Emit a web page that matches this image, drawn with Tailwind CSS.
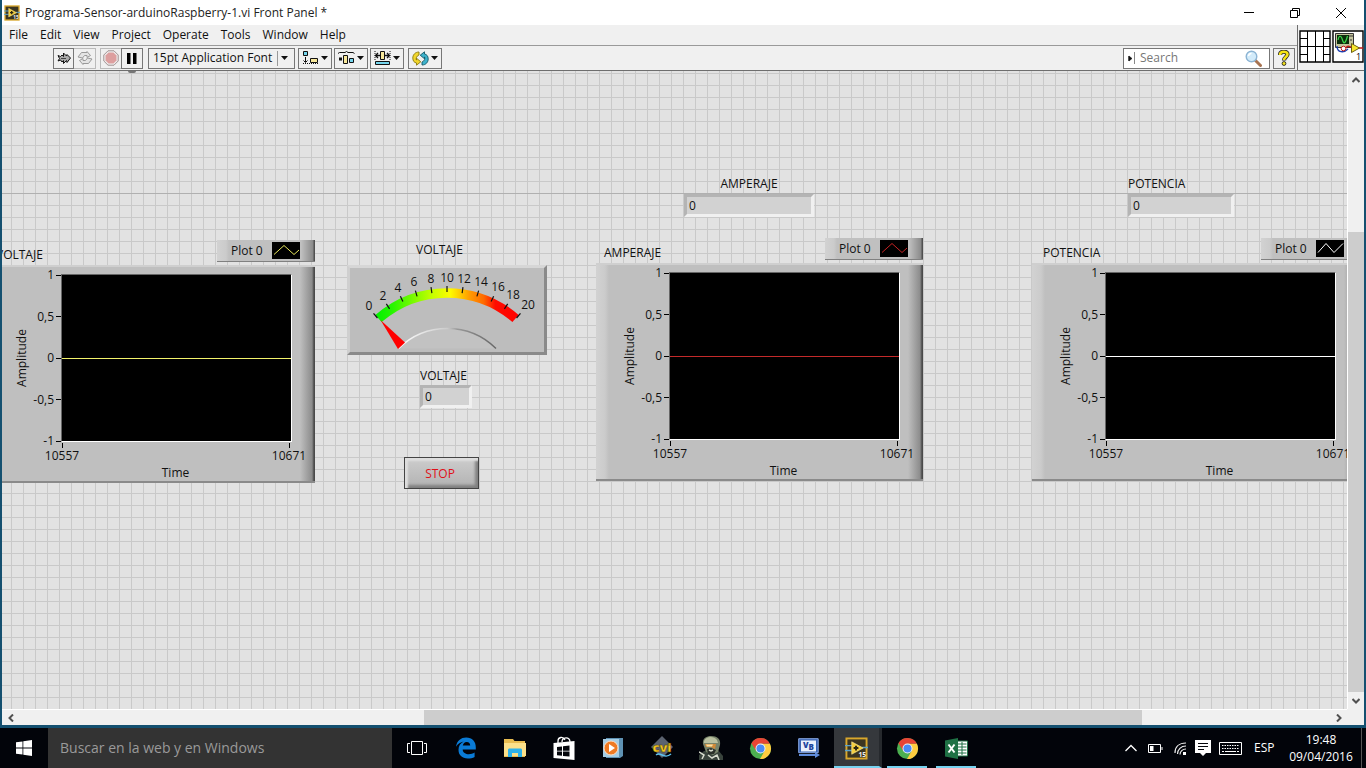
<!DOCTYPE html>
<html lang="es">
<head>
<meta charset="utf-8">
<title>Programa-Sensor-arduinoRaspberry-1.vi Front Panel *</title>
<meta name="viewport" content="width=device-width, initial-scale=1">
<script src="https://cdn.jsdelivr.net/npm/@tailwindcss/browser@4"></script>
</head>
<body class="flex h-screen flex-col overflow-hidden bg-[#02040a] font-['Open_Sans','Noto_Sans',sans-serif] text-xs text-[#111]">

<svg width="0" height="0" class="hidden" aria-hidden="true">
  <symbol id="chrome" viewBox="0 0 24 24">
    <circle cx="12" cy="12" r="11" fill="#4caf50"/>
    <path d="M12 7H21.8A11 11 0 0 1 11.500 23L16.300 14.500z" fill="#ffcd40"/>
    <path d="M12 12 7.500 14.600 2.500 6.500A11 11 0 0 1 21.800 7H12z" fill="#e84435"/>
    <circle cx="12" cy="12" r="5.200" fill="#f3f3f3"/>
    <circle cx="12" cy="12" r="4.200" fill="#4a8af4"/>
  </symbol>
  <symbol id="labview" viewBox="0 0 24 24">
    <rect x="1.500" y="1.500" width="21" height="21" fill="#3b3521" stroke="#d9a72c" stroke-width="2"/>
    <path d="M0 9H7M0 14H7M18 11H24" stroke="#5aa2cc" stroke-width="1.500"/>
    <path d="M7 5 19 11.500 7 18z" fill="#f5cf3d" stroke="#fff0a0" stroke-width=".6"/>
    <path d="M11.500 9v5M9 11.500h5" stroke="#2d2711" stroke-width="2"/>
    <text x="14" y="21" font-size="7" font-weight="700" fill="#eee">15</text>
  </symbol>
  <symbol id="caret" viewBox="0 0 7 4"><path d="M0 0H7L3.500 4z" fill="#111"/></symbol>
</svg>

<div class="flex min-h-0 flex-1 flex-col border-x-2 border-b-3 border-[#145070] bg-[#f0f0f0]">
  <header class="flex h-[25px] shrink-0 items-center bg-white pl-[2px]">
    <svg class="size-4" aria-hidden="true"><use href="#labview"/></svg>
    <h1 class="ml-[5px] flex-1 text-[#222]">Programa-Sensor-arduinoRaspberry-1.vi Front Panel *</h1>
    <button aria-label="Minimizar" class="flex h-6 w-[46px] items-center justify-center"><svg width="10" height="10"><path d="M0 4.500H10" stroke="#000"/></svg></button>
    <button aria-label="Restaurar" class="flex h-6 w-[46px] items-center justify-center"><svg width="10" height="10" fill="none" stroke="#000"><path d="M.5 2.500h7v7h-7zM2.500 2.500V.5h7v7h-2"/></svg></button>
    <button aria-label="Cerrar" class="flex h-6 w-[46px] items-center justify-center"><svg width="10" height="10" stroke="#000"><path d="M0 0 10 10M10 0 0 10"/></svg></button>
  </header>

  <div class="flex h-[46px] shrink-0 border-b border-[#6e6e6e]">
    <div class="flex flex-1 flex-col">
      <nav class="flex h-[21px] items-center gap-3 border-b border-[#9a9a9a] pl-[7px] pb-px">
        <a href="#">File</a><a href="#">Edit</a><a href="#">View</a><a href="#">Project</a><a href="#">Operate</a><a href="#">Tools</a><a href="#">Window</a><a href="#">Help</a>
      </nav>
      <div class="flex h-6 items-center pl-[51px] pr-[2px]">
        <button aria-label="Run" class="flex h-[21px] w-[21px] items-center justify-center border border-[#777]"><svg width="14" height="14" viewBox="0 0 14 14"><path d="m1 4.500 2.500 1L5 4l1.500 1.500V2l3 3 .5-1.500L13.500 7 10 11.500 9.500 9.500 6.500 12.500V9.500L5 11 3.500 9 1 10l1.500-2.500z" fill="#aaa" stroke="#111"/><path d="M4 7.500h5" stroke="#444"/></svg></button>
        <button aria-label="Run continuously" class="flex h-[21px] w-[22px] items-center justify-center border border-l-0 border-[#bbb]"><svg width="16" height="14" viewBox="0 0 16 14" fill="#e4e4e4" stroke="#9a9a9a"><path d="M1 6 4.500 1.500H10V.5l3.500 4L10 6.500V4.500H7.500l-2 2.500z"/><path d="M15 8l-3.500 4.500H6v1l-3.500-4L6 7.500v2h2.500L10.500 7z"/></svg></button>
        <button aria-label="Abort" class="ml-1 flex h-[21px] w-[21px] items-center justify-center border border-r-0 border-[#bbb]"><svg width="16" height="16" viewBox="0 0 16 16"><path d="M5 .8h6L15.200 5v6L11 15.200H5L.8 11V5z" fill="#eee" stroke="#a09090"/><path d="M5.500 2.500h5l3 3v5l-3 3h-5l-3-3v-5z" fill="#dd9f9f"/></svg></button>
        <button aria-label="Pause" class="flex h-[21px] w-[22px] items-center justify-center border border-[#777]"><svg width="10" height="11"><path d="M0 0h3.500v11H0zM6 0h3.500v11H6z" fill="#000"/></svg></button>
        <button class="ml-[5px] flex h-[21px] w-[147px] items-center border border-[#777] pl-1"><span class="flex-1 text-left whitespace-nowrap">15pt Application Font</span><span class="mr-[3px] h-[15px] w-px bg-[#999]"></span><svg class="mr-[6px]" width="7" height="4"><use href="#caret"/></svg></button>
        <button aria-label="Align objects" class="ml-[3px] flex h-[21px] w-[34px] items-center justify-center gap-[2px] border border-[#777]"><svg width="17" height="14" viewBox="0 0 17 14"><path d="M1.500.5h4v4h-4z" fill="#74d4ec" stroke="#111"/><path d="M8.500 7.500h7v4h-7z" fill="#f7e79a" stroke="#111"/><path d="M3.500 6v5M1.500 9.500l2 2 2-2" fill="none" stroke="#111"/><path d="M1 12.500h15" stroke="#111" stroke-dasharray="1"/></svg><svg width="7" height="4"><use href="#caret"/></svg></button>
        <button aria-label="Distribute objects" class="ml-[2px] flex h-[21px] w-[34px] items-center justify-center gap-[2px] border border-[#777]"><svg width="17" height="14" viewBox="0 0 17 14"><path d="M0 2.500 1.500 1.500H7L8.500.5 10 1.500h5l1.500 1" fill="none" stroke="#111"/><path d="M5.500 4.500h4v8h-4z" fill="#f7e79a" stroke="#111"/><path d="M11.500 7.500h4v4h-4z" fill="#74d4ec" stroke="#111"/><path d="M1 6.500h3v3H1z" fill="#111"/></svg><svg width="7" height="4"><use href="#caret"/></svg></button>
        <button aria-label="Resize objects" class="ml-[2px] flex h-[21px] w-[34px] items-center justify-center gap-[2px] border border-[#777]"><svg width="17" height="14" viewBox="0 0 17 14"><path d="M1 0v9M16 0v9" stroke="#111" stroke-dasharray="1"/><path d="M1.500 4.500H6M11 4.500h4.500M4 2 1.500 4.500 4 7M13 2l2.500 2.500L13 7" fill="none" stroke="#111" stroke-width="1.300"/><path d="M6.500.5h4v8h-4z" fill="#f7e79a" stroke="#111"/><path d="M1.500 10.500h14v3h-14z" fill="#74d4ec" stroke="#111"/></svg><svg width="7" height="4"><use href="#caret"/></svg></button>
        <button aria-label="Reorder" class="ml-1 flex h-[21px] w-[34px] items-center justify-center gap-[2px] border border-[#777]"><svg width="17" height="15" viewBox="0 0 17 15"><path d="M7 1C3 1 .8 4 .8 7c0 3 1.400 4.500 3.700 5v2.200l4.300-3.400-4.300-3.600v1.900C3.500 8.500 4.500 4.500 7 4z" fill="#f2d62c" stroke="#8a7a10" stroke-width=".9"/><path d="M10 14c4 0 6.200-3 6.200-6 0-3-1.400-4.500-3.700-5V.8L8.200 4.200l4.300 3.600V5.900c1 .7 0 4.600-2.500 5.100z" fill="#3db2cc" stroke="#145868" stroke-width=".9"/></svg><svg width="7" height="4"><use href="#caret"/></svg></button>
        <div class="ml-auto flex h-[21px] w-[147px] items-center border border-[#777] bg-white pl-1 pr-[7px]">
          <svg width="5" height="11"><path d="M.5 3v5M1 3l3 2.500L1 8z" fill="#111" stroke="#111" stroke-width=".6"/></svg><span class="ml-px h-3 w-px bg-[#888]"></span>
          <input type="search" aria-label="Search" placeholder="Search" class="ml-1 w-0 min-w-0 flex-1 bg-transparent pl-px outline-none placeholder:text-[#777]">
          <svg width="17" height="17" viewBox="0 0 17 17"><path d="m10 10 5.500 5.500" stroke="#a87452" stroke-width="3" stroke-linecap="round"/><circle cx="6.500" cy="6.500" r="5.300" fill="#d2ebfa" stroke="#8cb4d4" stroke-width="1.400"/><path d="M3.500 6a3 3 0 0 1 3-2.500" fill="none" stroke="#fff" stroke-width="1.500"/></svg>
        </div>
        <button aria-label="Help" class="ml-[3px] flex h-[21px] w-[22px] items-center justify-center border border-[#777]"><svg width="12" height="16" viewBox="0 0 12 16"><path d="M2 5c0-4.500 7.500-4 7.500-.8C9.500 7 6 7 6 10.500" fill="none" stroke="#222" stroke-width="4.200"/><path d="M2 5c0-4.500 7.500-4 7.500-.8C9.500 7 6 7 6 10" fill="none" stroke="#f6e418" stroke-width="2.600"/><circle cx="6" cy="13.500" r="1.900" fill="#f6e418" stroke="#222" stroke-width=".9"/></svg></button>
      </div>
    </div>
    <div class="flex gap-px border-l border-[#6e6e6e] pt-[5px] pl-px">
      <svg width="32" height="33" viewBox="0 0 32 33"><path d="M1 1h30v31H1z" fill="#fff" stroke="#000" stroke-width="1.400"/><path d="M8.500 1v31M16.500 1v31M24.500 1v31M1 8.500h7.500M1 16.500h30M1 24.500h7.500M24.500 8.500H31M24.500 24.500H31" stroke="#000"/></svg>
      <svg width="32" height="33" viewBox="0 0 32 33"><path d="M1 1h30v31H1z" fill="#fff" stroke="#000" stroke-width="1.400"/><path d="M3.500 3.500h18v14h-18z" fill="#c3c39c" stroke="#333"/><path d="M5 5h12v9H5z" fill="#0b2c0b"/><path d="M6 10c1-5 3-5 4.500 0s3 3 5-4" fill="none" stroke="#3bd84b" stroke-width="1.200"/><path d="M18 5v2M20 5v2M19 9v2" stroke="#333"/><path d="M5 16c0 7 7 7 11 3" fill="none" stroke="#1c3fb0" stroke-width="1.400"/><circle cx="11.500" cy="18.500" r="2.300" fill="#fff" stroke="#c01818"/><path d="M14 18c2-4 4 0 6-1M27 18h4" stroke="#c01818" fill="none" stroke-width="1.400"/><path d="m19.500 13.500 8 4.500-8 4.500z" fill="#f8e52c" stroke="#6b5f10"/><text x="24" y="30" font-size="9" fill="#000">1</text></svg>
    </div>
  </div>

  <div class="grid min-h-0 flex-1 grid-cols-[minmax(0,1fr)_17px] grid-rows-[minmax(0,1fr)_16px]">
    <!-- Front panel: objects are placed freely on the grid -->
    <main class="relative overflow-hidden bg-[#e2e2e2] bg-[linear-gradient(to_right,#c9c9c9_1px,transparent_1px),linear-gradient(to_bottom,#c9c9c9_1px,transparent_1px)] bg-[size:12px_12px] bg-[position:9px_2px]">
      <div class="absolute top-[122px] left-0 h-px w-full bg-[#b0b0b0]"></div>
      <div class="absolute top-0 left-[126px] h-[2px] w-2 rounded-b-full bg-[#777]"></div>

      <!-- Voltage chart -->
      <figure class="absolute top-[169px] left-[-14px] w-[327px]">
        <div class="flex h-[22px] items-end justify-between">
          <figcaption class="-mb-px pl-[8px] leading-4">VOLTAJE</figcaption>
          <div class="flex h-[22px] w-[98px] items-center border-b border-[#808080] bg-[linear-gradient(to_right,#d2d2d2_0,#cbcbcb_9px,#c0c0c0_12px,#c0c0c0_84px,#8a8a8a_96px,#505050_97px)]"><span class="ml-[14px] flex-1">Plot 0</span><svg class="mr-[15px] bg-black" width="28" height="17" fill="none" stroke="#e9e95e"><path d="M2 12.500 12 3.500 22 12.500 27 8"/></svg></div>
        </div>
        <div class="mt-[3px] flex h-[218px] flex-col border-t-2 border-b-2 border-t-[#cfcfcf] border-b-[#8a8a8a] bg-[linear-gradient(to_right,#d2d2d2_0,#cbcbcb_9px,#bfbfbf_13px,#bfbfbf_312px,#8c8c8c_324px,#4a4a4a_326px)]">
          <div class="flex">
            <span class="mt-[91px] ml-[26px] h-0 w-4 leading-4"><span class="block -translate-y-1/2 rotate-180 text-center [writing-mode:vertical-rl]">Amplitude</span></span>
            <ol class="flex h-[182px] w-[31px] flex-col justify-between text-right leading-4 whitespace-nowrap">
              <li class="flex items-center justify-end gap-[2px]">1<i class="h-px w-[5px] bg-black"></i></li><li class="flex items-center justify-end gap-[2px]">0,5<i class="h-px w-[5px] bg-black"></i></li><li class="flex items-center justify-end gap-[2px]">0<i class="h-px w-[5px] bg-black"></i></li><li class="flex items-center justify-end gap-[2px]">-0,5<i class="h-px w-[5px] bg-black"></i></li><li class="flex items-center justify-end gap-[2px]">-1<i class="h-px w-[5px] bg-black"></i></li>
            </ol>
            <div class="mt-[7px] flex h-[168px] w-[231px] items-center border border-t-[#666] border-r-white border-b-white border-l-[#666] bg-black"><div class="h-px w-full bg-[#f3f36b]"></div></div>
          </div>
          <div class="-mt-[6px] ml-[58px] flex w-[259px] justify-between leading-4"><span class="flex w-[32px] flex-col items-center"><i class="h-[5px] w-px bg-black"></i>10557</span><span class="flex w-[32px] flex-col items-center"><i class="h-[5px] w-px bg-black"></i>10671</span></div>
          <div class="mt-px ml-[58px] w-[259px] text-center leading-4">Time</div>
        </div>
      </figure>

      <!-- Current chart -->
      <figure class="absolute top-[167px] left-[594px] w-[327px]">
        <div class="flex h-[22px] items-end justify-between">
          <figcaption class="-mb-px pl-[8px] leading-4">AMPERAJE</figcaption>
          <div class="flex h-[22px] w-[98px] items-center border-b border-[#808080] bg-[linear-gradient(to_right,#d2d2d2_0,#cbcbcb_9px,#c0c0c0_12px,#c0c0c0_84px,#8a8a8a_96px,#505050_97px)]"><span class="ml-[14px] flex-1">Plot 0</span><svg class="mr-[15px] bg-black" width="28" height="17" fill="none" stroke="#c82424"><path d="M2 12.500 12 3.500 22 12.500 27 8"/></svg></div>
        </div>
        <div class="mt-[3px] flex h-[218px] flex-col border-t-2 border-b-2 border-t-[#cfcfcf] border-b-[#8a8a8a] bg-[linear-gradient(to_right,#d2d2d2_0,#cbcbcb_9px,#bfbfbf_13px,#bfbfbf_312px,#8c8c8c_324px,#4a4a4a_326px)]">
          <div class="flex">
            <span class="mt-[91px] ml-[26px] h-0 w-4 leading-4"><span class="block -translate-y-1/2 rotate-180 text-center [writing-mode:vertical-rl]">Amplitude</span></span>
            <ol class="flex h-[182px] w-[31px] flex-col justify-between text-right leading-4 whitespace-nowrap">
              <li class="flex items-center justify-end gap-[2px]">1<i class="h-px w-[5px] bg-black"></i></li><li class="flex items-center justify-end gap-[2px]">0,5<i class="h-px w-[5px] bg-black"></i></li><li class="flex items-center justify-end gap-[2px]">0<i class="h-px w-[5px] bg-black"></i></li><li class="flex items-center justify-end gap-[2px]">-0,5<i class="h-px w-[5px] bg-black"></i></li><li class="flex items-center justify-end gap-[2px]">-1<i class="h-px w-[5px] bg-black"></i></li>
            </ol>
            <div class="mt-[7px] flex h-[168px] w-[231px] items-center border border-t-[#666] border-r-white border-b-white border-l-[#666] bg-black"><div class="h-px w-full bg-[#c42a2a]"></div></div>
          </div>
          <div class="-mt-[6px] ml-[58px] flex w-[259px] justify-between leading-4"><span class="flex w-[32px] flex-col items-center"><i class="h-[5px] w-px bg-black"></i>10557</span><span class="flex w-[32px] flex-col items-center"><i class="h-[5px] w-px bg-black"></i>10671</span></div>
          <div class="mt-px ml-[58px] w-[259px] text-center leading-4">Time</div>
        </div>
      </figure>

      <!-- Power chart -->
      <figure class="absolute top-[167px] left-[1030px] w-[327px]">
        <div class="flex h-[22px] items-end justify-between">
          <figcaption class="-mb-px pl-[11px] leading-4">POTENCIA</figcaption>
          <div class="flex h-[22px] w-[98px] items-center border-b border-[#808080] bg-[linear-gradient(to_right,#d2d2d2_0,#cbcbcb_9px,#c0c0c0_12px,#c0c0c0_84px,#8a8a8a_96px,#505050_97px)]"><span class="ml-[14px] flex-1">Plot 0</span><svg class="mr-[15px] bg-black" width="28" height="17" fill="none" stroke="#fff"><path d="M2 12.500 10 3.500 18 12.500 27 3.500"/></svg></div>
        </div>
        <div class="mt-[3px] flex h-[218px] flex-col border-t-2 border-b-2 border-t-[#cfcfcf] border-b-[#8a8a8a] bg-[linear-gradient(to_right,#d2d2d2_0,#cbcbcb_9px,#bfbfbf_13px,#bfbfbf_312px,#8c8c8c_324px,#4a4a4a_326px)]">
          <div class="flex">
            <span class="mt-[91px] ml-[26px] h-0 w-4 leading-4"><span class="block -translate-y-1/2 rotate-180 text-center [writing-mode:vertical-rl]">Amplitude</span></span>
            <ol class="flex h-[182px] w-[31px] flex-col justify-between text-right leading-4 whitespace-nowrap">
              <li class="flex items-center justify-end gap-[2px]">1<i class="h-px w-[5px] bg-black"></i></li><li class="flex items-center justify-end gap-[2px]">0,5<i class="h-px w-[5px] bg-black"></i></li><li class="flex items-center justify-end gap-[2px]">0<i class="h-px w-[5px] bg-black"></i></li><li class="flex items-center justify-end gap-[2px]">-0,5<i class="h-px w-[5px] bg-black"></i></li><li class="flex items-center justify-end gap-[2px]">-1<i class="h-px w-[5px] bg-black"></i></li>
            </ol>
            <div class="mt-[7px] flex h-[168px] w-[231px] items-center border border-t-[#666] border-r-white border-b-white border-l-[#666] bg-black"><div class="h-px w-full bg-white"></div></div>
          </div>
          <div class="-mt-[6px] ml-[58px] flex w-[259px] justify-between leading-4"><span class="flex w-[32px] flex-col items-center"><i class="h-[5px] w-px bg-black"></i>10557</span><span class="flex w-[32px] flex-col items-center"><i class="h-[5px] w-px bg-black"></i>10671</span></div>
          <div class="mt-px ml-[58px] w-[259px] text-center leading-4">Time</div>
        </div>
      </figure>

      <!-- Voltage meter -->
      <figure class="absolute top-[171px] left-[345px] w-[200px]">
        <figcaption class="pl-[69px] leading-4">VOLTAJE</figcaption>
        <div class="mt-[7px] border-3 border-t-[#d6d6d6] border-r-[#8a8a8a] border-b-[#8a8a8a] border-l-[#cfcfcf] bg-[#bdbdbd]">
          <svg class="block w-full" viewBox="350 268 194 84" role="img" aria-label="Voltaje: 0">
            <defs><linearGradient id="scale" gradientUnits="userSpaceOnUse" x1="375" x2="520" y1="0" y2="0"><stop offset="0" stop-color="#00f000"/><stop offset=".12" stop-color="#27f500"/><stop offset=".4" stop-color="#c8ff00"/><stop offset=".52" stop-color="#fffb00"/><stop offset=".65" stop-color="#ff9d00"/><stop offset=".75" stop-color="#ff6a00"/><stop offset=".83" stop-color="#ff0c00"/><stop offset="1" stop-color="#f00"/></linearGradient>
            <linearGradient id="rim" x1="0" x2="1"><stop offset="0" stop-color="#fff"/><stop offset=".5" stop-color="#ccc"/><stop offset=".6" stop-color="#999"/><stop offset="1" stop-color="#666"/></linearGradient></defs>
            <path d="M378.500 318.500A104.500 104.500 0 0 1 515.500 318.500" fill="none" stroke="url(#scale)" stroke-width="9.500"/>
            <g stroke="#111" stroke-width="1.200">
              <path id="t" d="M447 286v6"/><use href="#t" transform="rotate(8.200 447 398)"/><use href="#t" transform="rotate(16.400 447 398)"/><use href="#t" transform="rotate(24.600 447 398)"/><use href="#t" transform="rotate(32.800 447 398)"/><use href="#t" transform="rotate(41 447 398)"/><use href="#t" transform="rotate(-8.200 447 398)"/><use href="#t" transform="rotate(-16.400 447 398)"/><use href="#t" transform="rotate(-24.600 447 398)"/><use href="#t" transform="rotate(-32.800 447 398)"/><use href="#t" transform="rotate(-41 447 398)"/>
            </g>
            <path d="M398.500 348.500A69.500 69.500 0 0 1 496 348.500" fill="#c2c2c2" stroke="url(#rim)" stroke-width="1.400"/>
            <path d="M380.500 320 405 342.500 398 349z" fill="#f00"/>
            <g font-size="12" text-anchor="middle" fill="#111"><text x="369" y="310">0</text><text x="383" y="300">2</text><text x="398" y="292">4</text><text x="414" y="286">6</text><text x="431" y="283">8</text><text x="447" y="282">10</text><text x="464" y="283">12</text><text x="481" y="286">14</text><text x="498" y="291">16</text><text x="513" y="299">18</text><text x="528" y="309">20</text></g>
          </svg>
        </div>
      </figure>

      <!-- Numeric indicators -->
      <div class="absolute top-[297px] left-[418px] w-[52px]">
        <label for="volt" class="block leading-4">VOLTAJE</label>
        <input id="volt" readonly value="0" class="mt-px block h-[23px] w-full border-3 border-t-[#b4b4b4] border-r-[#f0f0f0] border-b-[#f0f0f0] border-l-[#b4b4b4] bg-[#d2d2d2] pl-[2px] outline-none">
      </div>
      <div class="absolute top-[105px] left-[682px] w-[130px]">
        <label for="amp" class="block text-center leading-4">AMPERAJE</label>
        <input id="amp" readonly value="0" class="mt-[2px] block h-[23px] w-full border-3 border-t-[#b4b4b4] border-r-[#f0f0f0] border-b-[#f0f0f0] border-l-[#b4b4b4] bg-[#d2d2d2] pl-[2px] outline-none">
      </div>
      <div class="absolute top-[105px] left-[1126px] w-[106px]">
        <label for="pot" class="block leading-4">POTENCIA</label>
        <input id="pot" readonly value="0" class="mt-[2px] block h-[23px] w-full border-3 border-t-[#b4b4b4] border-r-[#f0f0f0] border-b-[#f0f0f0] border-l-[#b4b4b4] bg-[#d2d2d2] pl-[2px] outline-none">
      </div>

      <button class="absolute top-[386px] left-[402px] h-8 w-[75px] border border-[#444] bg-linear-to-b from-[#cdcdcd] to-[#b2b2b2] pt-px pr-[3px] text-[#e01018] shadow-[inset_3px_3px_2px_#dedede,inset_-3px_-3px_3px_#808080]">STOP</button>
    </main>

    <!-- Vertical scroll bar -->
    <div class="flex flex-col border-l border-white bg-[#f0f0f0]">
      <button aria-label="Subir" class="flex h-[17px] w-full items-center justify-center"><svg width="8" height="6" fill="none" stroke="#505050" stroke-width="2"><path d="M.5 5 4 1.500 7.500 5"/></svg></button>
      <div class="flex-[144]"></div><div class="flex-[460] bg-[#cdcdcd]"></div>
      <button aria-label="Bajar" class="flex h-[17px] w-full items-center justify-center"><svg width="8" height="6" fill="none" stroke="#505050" stroke-width="2"><path d="M.5 1 4 4.500 7.500 1"/></svg></button>
    </div>
    <!-- Horizontal scroll bar -->
    <div class="flex border-t border-white bg-[#f0f0f0]">
      <button aria-label="Izquierda" class="flex w-[17px] items-center justify-center"><svg width="6" height="8" fill="none" stroke="#505050" stroke-width="2"><path d="M5 .5 1.500 4 5 7.500"/></svg></button>
      <div class="flex-[406]"></div><div class="flex-[719] bg-[#cdcdcd]"></div><div class="flex-[188]"></div>
      <button aria-label="Derecha" class="flex w-[17px] items-center justify-center"><svg width="6" height="8" fill="none" stroke="#505050" stroke-width="2"><path d="M1 .5 4.500 4 1 7.500"/></svg></button>
    </div>
    <div class="bg-[#f0f0f0]"></div>
  </div>
</div>

<footer class="flex h-10 shrink-0 items-stretch bg-[#02040a] text-white">
  <button aria-label="Inicio" class="flex w-12 items-center justify-center"><svg width="16" height="16" fill="#fff"><path d="M0 2.300 6.500 1.400V7.600H0zM7.300 1.300 16 0V7.600H7.300zM0 8.400H6.500V14.600L0 13.700zM7.300 8.400H16V16L7.300 14.700z"/></svg></button>
  <input type="text" aria-label="Buscar" placeholder="Buscar en la web y en Windows" class="w-[344px] bg-[#333] px-3 text-sm outline-none placeholder:text-[#9a9a9a]">
  <nav class="ml-px flex gap-px" aria-label="Aplicaciones">
    <button aria-label="Vista de tareas" class="flex w-12 items-center justify-center"><svg width="20" height="14" fill="none" stroke="#fff"><path d="M4.500.5h11v13h-11zM3 2.500H.5v9H3M17 2.500h2.500v9H17"/></svg></button>
    <button aria-label="Edge" class="flex w-12 items-center justify-center"><svg width="22" height="22" viewBox="0 0 22 22"><path d="M1 9.800C1.800 4 5.800.6 11.200.6c6 0 9.600 4.200 9.600 9.600v2.300H7.700c.2 3.300 3 4.700 6 4.700 2.300 0 4.200-.6 5.900-1.600v4.300c-1.900 1-4.300 1.500-6.900 1.500-5.600 0-9.200-3.300-9.200-8.700 0-3.600 1.900-6.600 5.200-8.200C5.500 5 2.800 7 1 9.800zm6.800-1.200h7.400c0-2.200-1.200-3.700-3.500-3.700-2.200 0-3.500 1.500-3.900 3.700z" fill="#0a7bd6"/></svg></button>
    <button aria-label="Explorador" class="flex w-12 items-center justify-center"><svg width="22" height="20" viewBox="0 0 22 20"><path d="M0 1h9l1.500 2H21v16H0z" fill="#e8bc50"/><path d="M0 5h22v13H0z" fill="#fbe08a"/><path d="M4 12c0-1 .7-1.500 1.500-1.500h11c.8 0 1.500.5 1.500 1.500v7h-4v-4H8v4H4z" fill="#2eb2ea"/></svg></button>
    <button aria-label="Tienda" class="flex w-12 items-center justify-center"><svg width="22" height="24" viewBox="0 0 22 24"><path d="M5 7V5c0-4 5-5 7-1M9 6c0-5 8-6 8 0" fill="none" stroke="#fff" stroke-width="1.300"/><path d="M.5 7 21.500 5v19L.5 22z" fill="#fff"/><path d="m4 11 5-.6v4.300H4zM10 10.300l6.500-.8v5.200H10zM4 15.600h5v4.200l-5-.5zM10 15.600h6.500v5L10 20z" fill="#05070c"/></svg></button>
    <button aria-label="Reproductor" class="flex w-12 items-center justify-center"><svg width="20" height="20" viewBox="0 0 20 20"><path d="M3 0h17v18l-3 2H3z" fill="#5f92b4"/><path d="M0 1h16v18H0z" fill="#a6cde4"/><circle cx="8" cy="10" r="7" fill="#ef7a23" stroke="#fae0c8"/><path d="m6 6 6 4-6 4z" fill="#fff"/></svg></button>
    <button aria-label="CVI" class="flex w-12 items-center justify-center"><svg width="24" height="24" viewBox="0 0 24 24"><path d="m12 0 11 11-11 11L1 11z" fill="#5b6370"/><path d="M6 19c5-4 8 5 15-1" fill="none" stroke="#5fc1ec" stroke-width="1.500"/><text x="12" y="16" text-anchor="middle" font-size="13" font-weight="800" fill="#f5c81f" stroke="#4d3c00" stroke-width=".4">cvi</text></svg></button>
    <button aria-label="Halo" class="flex w-12 items-center justify-center"><svg width="24" height="24" viewBox="0 0 24 24"><path d="M0 24v-5l5-4 14-1 5 6v4z" fill="#39433c"/><path d="M4 8C3 2 8 0 12 0c6 0 10 3 9 9l-2 7-5 3-7-3z" fill="#77836a"/><path d="M5 5c2-5 10-5 13-1l1 3H5z" fill="#b9c0a0"/><path d="M6 8h11l-1 5-4-2H7z" fill="#d08a38"/><path d="M7 8.500h7l-1 2H8z" fill="#f8dfa4"/><path d="m8 13 4-1 5 2-2 4H9z" fill="#2b302a"/><path d="m10 14 2 1 2-1M0 16l5 3-2 4M9 19l4 3 5-3 2 5" fill="none" stroke="#d8dcce" stroke-width="1.500"/></svg></button>
    <button aria-label="Chrome" class="flex w-12 items-center justify-center"><svg width="23" height="23"><use href="#chrome"/></svg></button>
    <button aria-label="Visual Basic" class="flex w-12 items-center justify-center"><svg width="22" height="20" viewBox="0 0 22 20"><path d="M.7.700h19.500v14H.7z" fill="#3a64b4" stroke="#88a8e4"/><path d="M3 2.500h15v11H3z" fill="#e9f0fd"/><path d="M1 16h16v-2l5 3-5 3v-2H1z" fill="#5f8cdc"/><text x="5" y="9.500" font-size="8" font-weight="800" fill="#1e45a0">V</text><text x="10.500" y="12" font-size="8" font-weight="800" fill="#1e45a0">B</text></svg></button>
    <button aria-label="LabVIEW" class="flex w-12 items-center justify-center border-r-3 border-b-2 border-r-[#26292d] border-b-[#76d2f0] bg-[#35383c] pt-[2px]"><svg width="23" height="23"><use href="#labview"/></svg></button>
    <button aria-label="Chrome" class="flex w-12 justify-center"><span class="flex w-10 items-center justify-center border-b-2 border-[#76d2f0] pt-[2px]"><svg width="23" height="23"><use href="#chrome"/></svg></span></button>
    <button aria-label="Excel" class="flex w-12 justify-center"><span class="flex w-10 items-center justify-center border-b-2 border-[#76d2f0] pt-[2px]"><svg width="23" height="21" viewBox="0 0 23 21"><path d="M11.500 3h11v15h-11z" fill="#fff" stroke="#1f7145"/><path d="M13 6h8.500M13 9h8.500M13 12h8.500M13 15h8.500M17 4v13" stroke="#1f7145"/><path d="M0 2.500 13 0v21L0 18.500z" fill="#1f7145"/><path d="m3.500 6.500 6 8M9.500 6.500l-6 8" stroke="#fff" stroke-width="2"/></svg></span></button>
  </nav>
  <div class="ml-auto flex items-center">
    <button aria-label="Iconos ocultos" class="mr-[11px]"><svg width="12" height="8" fill="none" stroke="#fff" stroke-width="1.300"><path d="M.5 7 6 1.500 11.500 7"/></svg></button>
    <svg class="mr-[11px]" width="15" height="9" fill="none" stroke="#fff"><path d="M.5.5h12v8H.5zM14 3v3"/><path d="M2 2h3.500v5H2z" fill="#fff" stroke="none"/></svg>
    <svg class="mr-[8px]" width="13" height="13" viewBox="0 0 13 13" fill="none" stroke="#eee" stroke-width="1.200"><path d="M1 11C1 5 5 1 12 1M3.500 12C3.500 7.500 7 4 12 4M6 12.500C6 9.500 8.500 7 12 7"/><path d="M9 10h3v3H9z" fill="#fff" stroke="none"/></svg>
    <svg class="mr-2" width="16" height="16" viewBox="0 0 16 16"><path d="M0 0h16v13h-5l-3 3-3-3H0z" fill="#fff"/><path d="M3 3.500h10M3 6.500h10M3 9.500h6" stroke="#05070c"/></svg>
    <svg class="mr-3" width="23" height="13" viewBox="0 0 23 13" fill="none" stroke="#fff"><path d="M.5.5h22v12H.5z"/><path d="M3 3.500h17M3 6.500h17" stroke-dasharray="1.500 1"/><path d="M3 9.500h2M6 9.500h11M18 9.500h2"/></svg>
    <span class="w-[34px]">ESP</span>
    <time datetime="2016-04-09T19:48" class="mr-[7px] w-[66px] text-center leading-[17px]">19:48<br>09/04/2016</time>
    <div class="h-full w-[5px] border-l border-[#555]"></div>
  </div>
</footer>
</body>
</html>
